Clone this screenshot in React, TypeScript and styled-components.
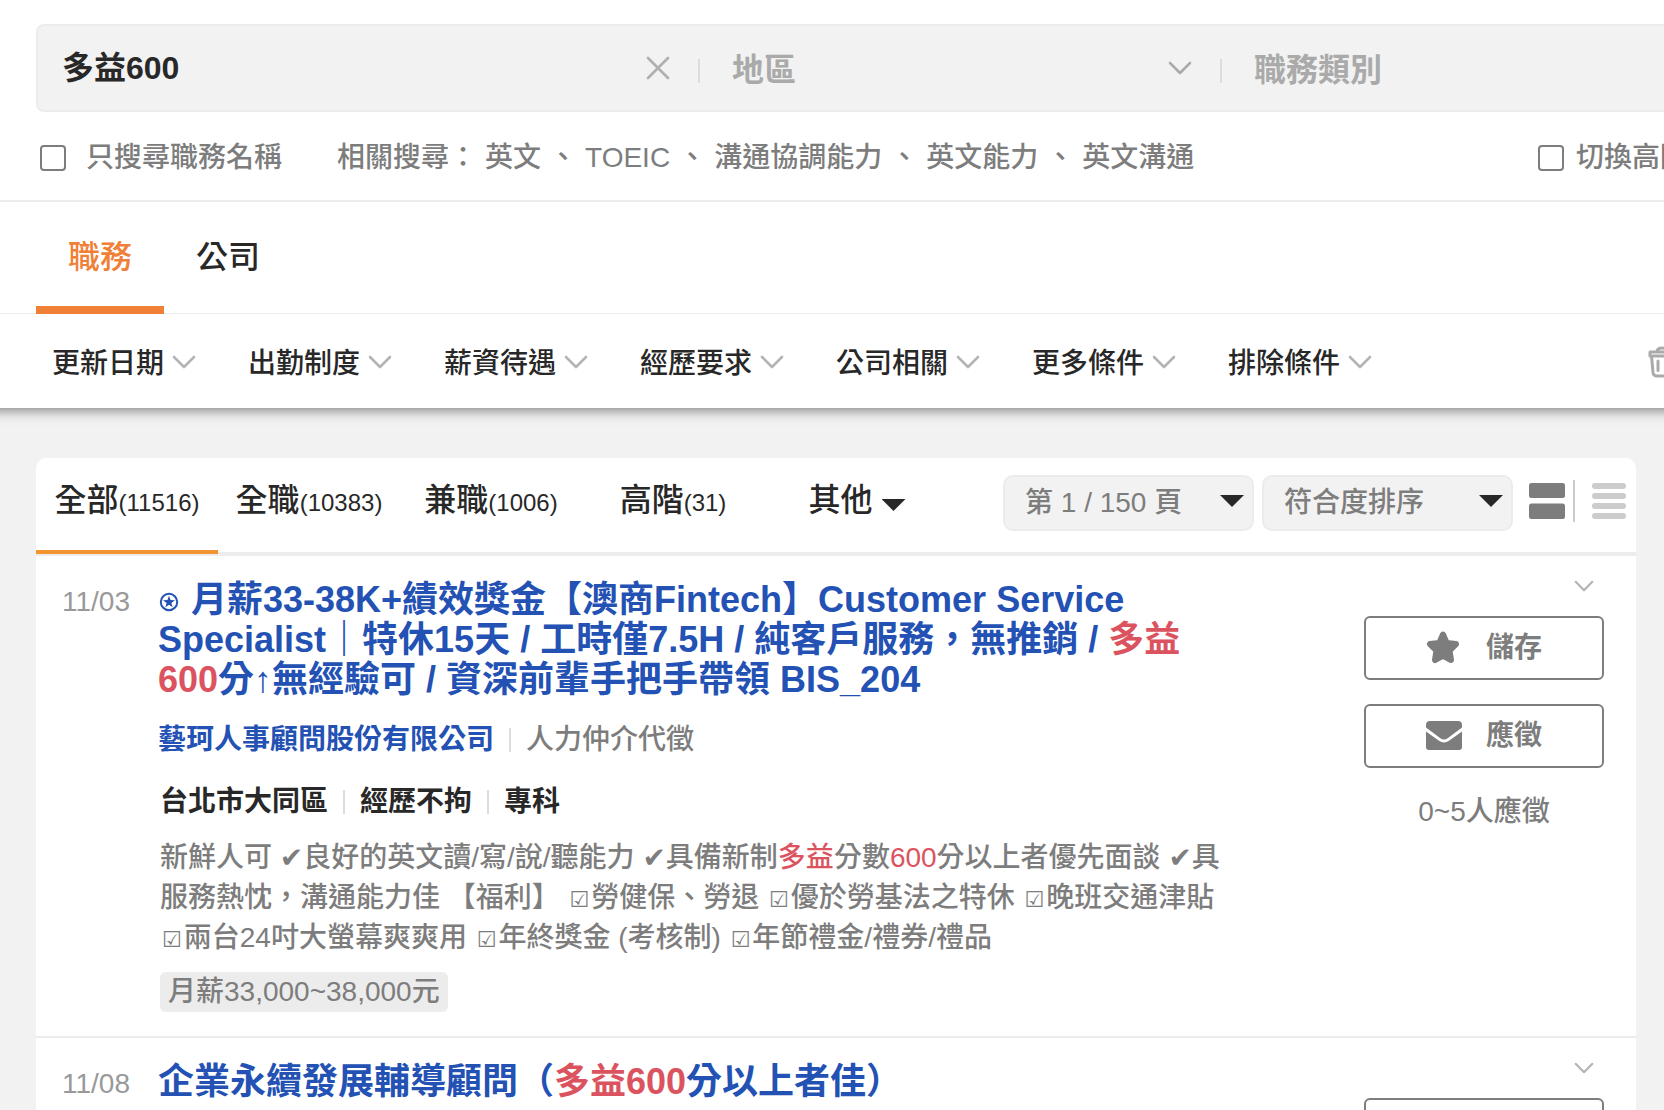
import React from "react";
import styled, { createGlobalStyle, css } from "styled-components";

const color = {
  text: "#282828",
  gray: "#7d7d7d",
  light: "#aaaaaa",
  date: "#999999",
  line: "#ececec",
  panel: "#f2f2f2",
  blue: "#2352b4",
  red: "#dc5360",
  orange: "#ef8035",
  amber: "#f39433",
};

const GlobalStyle = createGlobalStyle`
  *, *::before, *::after { box-sizing: border-box; }
  body {
    margin: 0;
    background: ${color.panel};
    color: ${color.text};
    font-family: "Liberation Sans", "Noto Sans CJK TC", sans-serif;
    font-size: 28px;
    font-weight: 500;
    line-height: 40px;
  }
  button, input, select { font: inherit; color: inherit; margin: 0; }
  button { background: none; border: 0; padding: 0; cursor: pointer; }
  a { color: inherit; text-decoration: none; }
  h2, p, ul { margin: 0; padding: 0; font: inherit; }
  svg { display: block; flex: none; }
`;

const Page = styled.div`
  overflow: hidden;
  min-height: 100vh;
`;

const Header = styled.header`
  position: relative;
  min-width: 1688px;
  padding-top: 24px;
  background: #fff;
  box-shadow: 0 -10px 12px 12px rgba(0, 0, 0, 0.5);
`;

const SearchBar = styled.form`
  display: grid;
  grid-template-columns: 662px 522px 1fr;
  height: 88px;
  margin-left: 36px;
  background: ${color.panel};
  border: 2px solid ${color.line};
  border-right: 0;
  border-radius: 8px 0 0 8px;
`;

const Field = styled.div`
  display: flex;
  align-items: center;
  gap: 28px;
  padding-left: 24px;
`;

const Keyword = styled.input`
  flex: 1;
  min-width: 0;
  padding: 0;
  border: 0;
  outline: 0;
  background: none;
  font-size: 32px;
  font-weight: 700;
`;

const Picker = styled.button`
  flex: 1;
  display: flex;
  align-items: center;
  justify-content: space-between;
  padding-left: 8px;
  color: ${color.light};
  font-size: 32px;
  font-weight: 700;
`;

const PickerLabel = styled.span`
  padding-top: 4px;
`;

const Divider = styled.span`
  flex: none;
  width: 2px;
  height: 24px;
  background: #dddddd;
`;

const FieldDivider = styled(Divider)`
  margin-top: 6px;
`;

const OptionRow = styled.div`
  display: flex;
  align-items: center;
  height: 90px;
  padding: 4px 0 0 40px;
  border-bottom: 2px solid ${color.line};
  color: ${color.gray};
`;

const CheckLabel = styled.label<{ $gap: number }>`
  display: flex;
  align-items: center;
  gap: ${(p) => p.$gap}px;
  white-space: nowrap;
`;

const Checkbox = styled.input`
  appearance: none;
  width: 26px;
  height: 26px;
  margin: 0;
  border: 2px solid ${color.gray};
  border-radius: 4px;
`;

const Related = styled.div`
  display: flex;
  flex: 1;
  gap: 8px;
  margin-left: 55px;
`;

const TypeTabs = styled.nav`
  display: flex;
  height: 112px;
  padding-left: 36px;
  border-bottom: 1px solid ${color.line};
`;

const TypeTab = styled.button<{ $active?: boolean }>`
  width: 128px;
  height: 112px;
  padding-top: 6px;
  border-bottom: 8px solid ${(p) => (p.$active ? color.orange : "transparent")};
  color: ${(p) => (p.$active ? color.orange : color.text)};
  font-size: 32px;
`;

const FilterRow = styled.div`
  display: flex;
  align-items: center;
  gap: 52px;
  height: 94px;
  padding: 2px 12px 0 52px;
`;

const FilterButton = styled.button`
  display: flex;
  align-items: center;
  gap: 8px;
`;

const FilterLabel = styled.span`
  padding-top: 4px;
`;

const ClearButton = styled.button`
  margin-left: auto;
`;

const Main = styled.main`
  margin: 50px 28px 0 36px;
`;

const Card = styled.section`
  background: #fff;
  border-radius: 10px 10px 0 0;
`;

const ListHeader = styled.div`
  display: flex;
  align-items: center;
  height: 98px;
  padding: 0 10px 4px 0;
  border-bottom: 4px solid ${color.line};
`;

const KindTab = styled.button<{ $active?: boolean }>`
  display: flex;
  justify-content: center;
  align-items: baseline;
  flex: none;
  width: 182px;
  height: 96px;
  padding-top: 22px;
  font-size: 32px;
  align-self: flex-start;
  border-bottom: 4px solid ${(p) => (p.$active ? color.amber : "transparent")};
`;

const Count = styled.span`
  font-size: 24px;
`;

const caret = css`
  content: "";
  width: 24px;
  height: 12px;
  background: ${color.text};
  clip-path: polygon(0 0, 100% 0, 50% 100%);
`;

const OtherTab = styled(KindTab)`
  gap: 9px;
  padding-left: 4px;
  &::after { ${caret} }
`;

const SelectBox = styled.label`
  display: grid;
  align-items: center;
  flex: none;
  width: 251px;
  height: 56px;
  margin-right: 8px;
  background: ${color.panel};
  border: 2px solid ${color.line};
  border-radius: 10px;
  &::after {
    ${caret}
    grid-area: 1 / 1;
    justify-self: end;
    margin: 0 8px 4px 0;
    pointer-events: none;
  }
`;

const Select = styled.select`
  grid-area: 1 / 1;
  appearance: none;
  width: 100%;
  padding: 0 0 0 20px;
  border: 0;
  background: none;
  color: ${color.gray};
`;

const ListTools = styled.div`
  display: flex;
  align-items: center;
  margin-left: auto;
`;

const ViewSwitch = styled.div`
  display: flex;
  align-items: center;
  gap: 8px;
  margin-left: 8px;
  padding-bottom: 4px;
`;

const ViewDivider = styled(Divider)`
  height: 42px;
  margin-right: 9px;
  background: #cccccc;
`;

const JobRow = styled.article`
  display: grid;
  grid-template-columns: 98px minmax(0, 1fr) 240px;
  padding: 24px 32px 24px 24px;
  border-bottom: 2px solid ${color.line};
`;

const PostDate = styled.time`
  padding: 2px 0 0 2px;
  color: ${color.date};
`;

const JobTitle = styled.h2`
  color: ${color.blue};
  font-size: 36px;
  font-weight: 700;
  line-height: 40px;
  svg { display: inline-block; margin: 0 2px 0 1px; }
`;

const Mark = styled.em`
  color: ${color.red};
  font-style: normal;
`;

const Facts = styled.div<{ $strong?: boolean }>`
  display: flex;
  align-items: center;
  gap: 15px;
  margin-top: ${(p) => (p.$strong ? 22 : 20)}px;
  padding-left: ${(p) => (p.$strong ? 2 : 0)}px;
  color: ${(p) => (p.$strong ? color.text : color.gray)};
  font-weight: ${(p) => (p.$strong ? 700 : 500)};
`;

const Company = styled.a`
  color: ${color.blue};
  font-weight: 700;
`;

const Description = styled.p`
  margin: 16px 0 14px 2px;
  color: ${color.gray};
  white-space: nowrap;
`;

const Tick = styled.span`
  font-family: "DejaVu Sans", sans-serif;
  line-height: 1;
`;

const BoxTick = styled(Tick)`
  padding: 0 2px;
  font-size: 22px;
`;

const Tag = styled.span`
  display: inline-block;
  vertical-align: top;
  margin-left: 2px;
  padding: 0 8px;
  border-radius: 6px;
  background: ${color.line};
  color: ${color.gray};
`;

const Actions = styled.div`
  display: flex;
  flex-direction: column;
  color: ${color.gray};
  text-align: center;
`;

const Expand = styled.button`
  align-self: flex-end;
  margin-right: 10px;
`;

const ActionButton = styled.button`
  display: flex;
  align-items: center;
  gap: 24px;
  height: 64px;
  margin-bottom: 24px;
  padding-left: 60px;
  border: 2px solid ${color.gray};
  border-radius: 6px;
  font-weight: 700;
`;

const ButtonStack = styled.div`
  display: flex;
  flex-direction: column;
  margin-top: 24px;
`;

const Chevron = ({ width = 24, height = 14, stroke = "#b4b4b4" }) => (
  <svg width={width} height={height} viewBox="0 0 24 14" fill="none" stroke={stroke} strokeWidth="2.6" strokeLinecap="round" strokeLinejoin="round" aria-hidden="true">
    <path d="M2 2l10 10L22 2" />
  </svg>
);

const Cross = () => (
  <svg width="24" height="24" viewBox="0 0 24 24" fill="none" stroke="#b0b0b0" strokeWidth="2.6" strokeLinecap="round" aria-hidden="true">
    <path d="M2 2l20 20M22 2L2 22" />
  </svg>
);

const Trash = () => (
  <svg width="28" height="32" viewBox="0 0 28 32" fill="none" stroke="#aaaaaa" strokeWidth="3" strokeLinecap="round" strokeLinejoin="round" aria-hidden="true">
    <path d="M2 6h24v4H2zM9 6q0-4 5-4t5 4M3.500 10l1.500 16.500q.4 3.500 4 3.500h10q3.600 0 4-3.500l1.500-16.500" />
    <path d="M10 15v9.500M18 15v9.500" />
  </svg>
);

const CircledStar = () => (
  <svg width="20" height="20" viewBox="0 0 20 20" aria-hidden="true">
    <circle cx="10" cy="10" r="8.200" fill="none" stroke={color.blue} strokeWidth="2" />
    <path fill={color.blue} d="M10 3.800l1.500 4.300 4.500.1-3.600 2.700 1.300 4.400-3.700-2.600-3.700 2.600 1.300-4.400L4 8.200l4.500-.1z" />
  </svg>
);

const Star = () => (
  <svg width="36" height="36" viewBox="0 0 36 36" aria-hidden="true">
    <path
      fill={color.gray}
      stroke={color.gray}
      strokeWidth="6"
      strokeLinejoin="round"
      d="M17 4.500l3.700 8.500 9.300 1.100-6.500 6.400 1.500 9.500-8-4.300-8 4.300 1.500-9.500L4 14.100l9.300-1.100z"
    />
  </svg>
);

const Envelope = () => (
  <svg width="36" height="30" viewBox="0 0 36 30" fill={color.gray} aria-hidden="true">
    <path d="M4 0h28q4 0 4 4v2.500L22 17q-4 3-8 0L0 6.500V4q0-4 4-4z" />
    <path d="M0 10.500L13 19.800q5 3.400 10 0l13-9.300V26q0 3-3 3H3q-3 0-3-3z" />
  </svg>
);

const CardsIcon = () => (
  <svg width="36" height="36" viewBox="0 0 36 36" fill={color.gray} aria-hidden="true">
    <rect width="36" height="15" rx="2.500" />
    <rect y="20.500" width="36" height="15.500" rx="2.500" />
  </svg>
);

const LinesIcon = () => (
  <svg width="34" height="36" viewBox="0 0 34 36" fill="#cccccc" aria-hidden="true">
    {[0, 10, 20, 30].map((y) => (
      <rect key={y} y={y} width="34" height="6" rx="3" />
    ))}
  </svg>
);

const related = ["英文", "TOEIC", "溝通協調能力", "英文能力", "英文溝通"];
const filters = ["更新日期", "出勤制度", "薪資待遇", "經歷要求", "公司相關", "更多條件", "排除條件"];
const kinds = [
  { name: "全部", count: 11516 },
  { name: "全職", count: 10383 },
  { name: "兼職", count: 1006 },
  { name: "高階", count: 31 },
];

const JobActions = ({ applicants }: { applicants: string }) => (
  <Actions>
    <Expand type="button" aria-label="展開">
      <Chevron width={20} height={12} />
    </Expand>
    <ButtonStack>
      <ActionButton type="button"><Star />儲存</ActionButton>
      <ActionButton type="button"><Envelope />應徵</ActionButton>
    </ButtonStack>
    <span>{applicants}</span>
  </Actions>
);

export default function App() {
  return (
    <Page>
      <GlobalStyle />
      <Header>
        <SearchBar onSubmit={(e) => e.preventDefault()}>
          <Field>
            <Keyword aria-label="關鍵字" defaultValue="多益600" />
            <button type="button" aria-label="清除"><Cross /></button>
            <FieldDivider />
          </Field>
          <Field>
            <Picker type="button"><PickerLabel>地區</PickerLabel><Chevron stroke="#aaaaaa" /></Picker>
            <FieldDivider />
          </Field>
          <Field>
            <Picker type="button"><PickerLabel>職務類別</PickerLabel></Picker>
          </Field>
        </SearchBar>
        <OptionRow>
          <CheckLabel $gap={20}><Checkbox type="checkbox" />只搜尋職務名稱</CheckLabel>
          <Related>
            <span>相關搜尋：</span>
            {related.map((word, i) => (
              <React.Fragment key={word}>
                {i > 0 && <span>、</span>}
                <a href="#related">{word}</a>
              </React.Fragment>
            ))}
          </Related>
          <CheckLabel $gap={12}><Checkbox type="checkbox" />切換高階</CheckLabel>
        </OptionRow>
        <TypeTabs>
          <TypeTab $active type="button">職務</TypeTab>
          <TypeTab type="button">公司</TypeTab>
        </TypeTabs>
        <FilterRow>
          {filters.map((name) => (
            <FilterButton key={name} type="button"><FilterLabel>{name}</FilterLabel><Chevron /></FilterButton>
          ))}
          <ClearButton type="button" aria-label="清除條件"><Trash /></ClearButton>
        </FilterRow>
      </Header>

      <Main>
        <Card>
          <ListHeader>
            {kinds.map((kind, i) => (
              <KindTab key={kind.name} type="button" $active={i === 0}>
                {kind.name}<Count>({kind.count})</Count>
              </KindTab>
            ))}
            <OtherTab type="button">其他</OtherTab>
            <ListTools>
              <SelectBox>
                <Select aria-label="頁數"><option>第 1 / 150 頁</option></Select>
              </SelectBox>
              <SelectBox>
                <Select aria-label="排序"><option>符合度排序</option></Select>
              </SelectBox>
              <ViewSwitch>
                <button type="button" aria-label="卡片檢視"><CardsIcon /></button>
                <ViewDivider />
                <button type="button" aria-label="列表檢視"><LinesIcon /></button>
              </ViewSwitch>
            </ListTools>
          </ListHeader>

          <JobRow>
            <PostDate>11/03</PostDate>
            <div>
              <JobTitle>
                <a href="#job-1">
                  <CircledStar /> 月薪33-38K+績效獎金【澳商Fintech】Customer Service<br />
                  Specialist｜特休15天 / 工時僅7.5H / 純客戶服務，無推銷 / <Mark>多益<br />
                  600</Mark>分↑無經驗可 / 資深前輩手把手帶領 BIS_204
                </a>
              </JobTitle>
              <Facts>
                <Company href="#company-1">藝珂人事顧問股份有限公司</Company>
                <Divider />
                <span>人力仲介代徵</span>
              </Facts>
              <Facts $strong>
                <span>台北市大同區</span>
                <Divider />
                <span>經歷不拘</span>
                <Divider />
                <span>專科</span>
              </Facts>
              <Description>
                新鮮人可 <Tick>✔</Tick>良好的英文讀/寫/說/聽能力 <Tick>✔</Tick>具備新制<Mark>多益</Mark>分數<Mark>600</Mark>分以上者優先面談 <Tick>✔</Tick>具<br />
                服務熱忱，溝通能力佳 【福利】 <BoxTick>☑</BoxTick>勞健保、勞退 <BoxTick>☑</BoxTick>優於勞基法之特休 <BoxTick>☑</BoxTick>晚班交通津貼<br />
                <BoxTick>☑</BoxTick>兩台24吋大螢幕爽爽用 <BoxTick>☑</BoxTick>年終獎金 (考核制) <BoxTick>☑</BoxTick>年節禮金/禮券/禮品
              </Description>
              <Tag>月薪33,000~38,000元</Tag>
            </div>
            <JobActions applicants="0~5人應徵" />
          </JobRow>

          <JobRow>
            <PostDate>11/08</PostDate>
            <div>
              <JobTitle>
                <a href="#job-2">企業永續發展輔導顧問（<Mark>多益600</Mark>分以上者佳）</a>
              </JobTitle>
            </div>
            <JobActions applicants="0~5人應徵" />
          </JobRow>
        </Card>
      </Main>
    </Page>
  );
}
